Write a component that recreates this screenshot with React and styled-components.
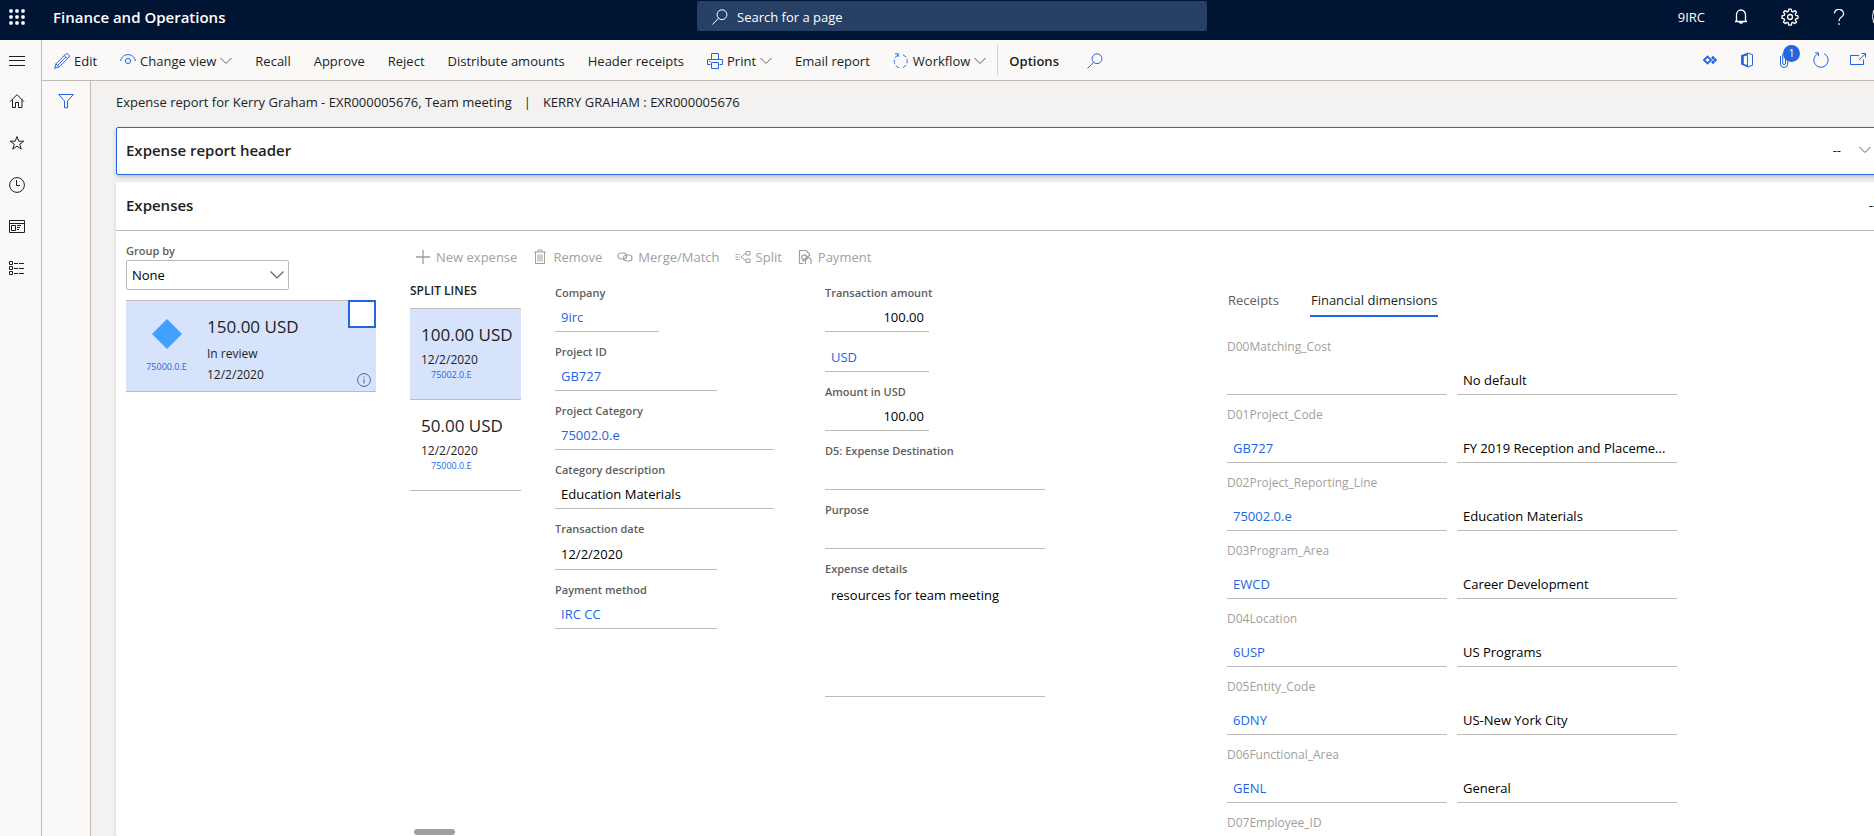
import React from "react";
import styled, { createGlobalStyle } from "styled-components";

const GlobalStyle = createGlobalStyle`
  *, *::before, *::after { box-sizing: border-box; }
  html, body { margin: 0; padding: 0; overflow: hidden; }
  body, button, input, select, textarea {
    font-family: "Open Sans", "Noto Sans", sans-serif;
    font-size: 13px;
    color: #201f1e;
  }
  button { background: none; border: 0; padding: 0; cursor: pointer; }
`;

const blue = "#2266e3";
const line = "#bebbb8";

/* ---------- icons ---------- */

const Svg = styled.svg`
  display: block;
  flex: none;
  fill: none;
  stroke: currentColor;
  stroke-width: 1;
  color: ${(p) => p.$color || "inherit"};
`;

const Icon = ({ size = 16, color, children }) => (
  <Svg width={size} height={size} viewBox="0 0 16 16" $color={color} aria-hidden="true">
    {children}
  </Svg>
);

const WaffleIcon = () => (
  <Icon>
    {[0, 6, 12].map((y) =>
      [0, 6, 12].map((x) => (
        <rect key={`${x}-${y}`} x={x + 0.3} y={y + 0.3} width="3.4" height="3.4" rx="1" fill="currentColor" stroke="none" />
      ))
    )}
  </Icon>
);
const SearchIcon = ({ size, color }) => (
  <Icon size={size} color={color}>
    <circle cx="10" cy="5.7" r="4.9" />
    <path d="M6.5 9.3 L0.5 15.5" />
  </Icon>
);
const BellIcon = () => (
  <Icon>
    <path d="M3.5 12.5 V6 a4.5 5 0 0 1 9 0 V12.5 M2 12.5 H14 M6.3 13 a1.8 1.8 0 0 0 3.4 0" strokeWidth="1.3" />
  </Icon>
);
const GearIcon = () => (
  <Icon size={18}>
    <circle cx="8" cy="8" r="2.2" strokeWidth="1.2" />
    <path
      strokeWidth="1.2"
      strokeLinejoin="round"
      d="M6.9 1 h2.2 l.4 1.9 1.1.5 1.7-1.1 1.5 1.5 -1.1 1.7 .5 1.1 1.9.4 v2.2 l-1.9.4 -.5 1.1 1.1 1.7 -1.5 1.5 -1.7-1.1 -1.1.5 -.4 1.9 h-2.2 l-.4-1.9 -1.1-.5 -1.7 1.1 -1.5-1.5 1.1-1.7 -.5-1.1 -1.9-.4 v-2.2 l1.9-.4 .5-1.1 -1.1-1.7 1.5-1.5 1.7 1.1 1.1-.5z"
    />
  </Icon>
);
const HelpIcon = () => (
  <Icon>
    <path d="M3.5 4.5 a4.5 4.2 0 1 1 6.6 3.8 q-2.1 1.4-2.1 4" strokeWidth="1.2" />
    <rect x="7.3" y="14.2" width="1.4" height="1.6" fill="currentColor" stroke="none" />
  </Icon>
);
const MenuIcon = () => (
  <Icon>
    <path d="M0 4.5 H16 M0 8.5 H16 M0 13.5 H16" />
  </Icon>
);
const HomeIcon = () => (
  <Icon>
    <path d="M1 8.7 L8 1.7 L15 8.7 M3.5 6.5 V14.5 H6.5 V9.5 H9.5 V14.5 H13 V6.5" />
  </Icon>
);
const StarIcon = () => (
  <Icon>
    <path d="M8 1.5 L9.7 6.2 H14.8 L10.7 9.2 L12.3 14.2 L8 11.2 L3.7 14.2 L5.3 9.2 L1.2 6.2 H6.3 Z" />
  </Icon>
);
const ClockIcon = () => (
  <Icon>
    <circle cx="8" cy="8" r="7.4" />
    <path d="M7.5 3 V8.5 H11" />
  </Icon>
);
const WorkspaceIcon = () => (
  <Icon>
    <path d="M0.5 1.5 H15.5 V13.5 H0.5 Z M0.5 4.5 H15.5 M2.5 6.5 H6.5 V11.5 H2.5 Z M8 6.5 H12 M8 8.5 H11 M8 10.5 H10" />
  </Icon>
);
const ModulesIcon = () => (
  <Icon>
    <path d="M0.5 0.5 h3 v3 h-3z M0.5 5.5 h3 v3 h-3z M0.5 10.5 h3 v3 h-3z M5 2.5 H9 M10 2.5 H15 M5 7.5 H9 M10 7.5 H15 M5 12.5 H9 M10 12.5 H15" />
  </Icon>
);
const FunnelIcon = () => (
  <Icon color={blue}>
    <path d="M0.7 1.5 H15.3 L9.5 8 V14.8 H6.5 V8 Z" strokeLinejoin="round" />
  </Icon>
);
const EditIcon = () => (
  <Icon color={blue}>
    <path d="M0.7 15.3 L2 10.8 L11.8 1 Q13.2 0.2 14.5 1.5 T15 4.2 L5.2 14 Z M10.3 2.6 L13.4 5.7 M2 10.8 L5.2 14 M3.6 12.4 L11.9 4.1" />
  </Icon>
);
const EyeIcon = () => (
  <Icon color={blue}>
    <path d="M0.5 8 C2 -0.5 14 -0.5 15.5 8" />
    <circle cx="8" cy="8" r="2.6" />
  </Icon>
);
const ChevronIcon = ({ size = 12, color = "#605e5c" }) => (
  <Svg width={size} height={size} viewBox="0 0 12 12" $color={color} aria-hidden="true">
    <path d="M0.5 3 L6 8.5 L11.5 3" />
  </Svg>
);
const PrintIcon = () => (
  <Icon color={blue}>
    <path d="M4.5 6.5 V0.5 H11.5 V6.5 M3.5 11.5 H0.5 V6.5 H15.5 V11.5 H12.5 M4.5 9.5 H11.5 V15.5 H4.5 Z M2 8.5 H3.5" />
  </Icon>
);
const WorkflowIcon = () => (
  <Icon color={blue}>
    <path d="M5 2 A7 7 0 0 0 6 14.8 M10 1.8 A7 7 0 0 1 10 14.6" strokeDasharray="4 2" />
    <path d="M2 0.8 H5.3 V4" />
  </Icon>
);
const DiamondsIcon = () => (
  <Icon color={blue}>
    <path d="M5.5 4.5 L9 8 L5.5 11.5 L2 8 Z" strokeWidth="1.8" />
    <path d="M11 3.7 L13 5.7 L11 7.7 L9 5.7Z M11 8.3 L13 10.3 L11 12.3 L9 10.3Z M13.2 6 L15.2 8 L13.2 10 L11.2 8Z" fill="currentColor" stroke="none" />
  </Icon>
);
const OfficeIcon = () => (
  <Icon color={blue}>
    <path d="M8.5 0.8 L2 3.2 V12.6 L8.5 15.2 V13 L4.8 12 V4.6 L8.5 3.2 Z" fill="currentColor" stroke="none" />
    <path d="M8.5 1 V15 L13.5 13.3 V2.6 Z" />
  </Icon>
);
const ClipIcon = () => (
  <Icon color={blue}>
    <path d="M9.5 4 V11 a1.3 1.5 0 0 1 -2.8 0 V3 a2.2 2.4 0 0 1 5 0 V12 a3.6 3.5 0 0 1 -7.2 0 V4" />
  </Icon>
);
const RefreshIcon = () => (
  <Icon color={blue}>
    <path d="M5 1.6 A7.2 7.2 0 1 0 11 1.6 M2 0.8 H5.5 V4.3" />
  </Icon>
);
const PopOutIcon = () => (
  <Icon color={blue}>
    <path d="M9 3.5 H0.5 V12.5 H13.5 V7.5 M9 8 L15.3 2 M11.5 1.5 H15.5 V5.5" />
  </Icon>
);
const PlusIcon = () => (
  <Icon>
    <path d="M8 1 V15 M1 8 H15" strokeWidth="1.3" />
  </Icon>
);
const TrashIcon = () => (
  <Icon>
    <path d="M2 3 H14 M6 3 V1 H10 V3 M3.5 3 V14.5 H12.5 V3 M6 5.5 V12.5 M8 5.5 V12.5 M10 5.5 V12.5" />
  </Icon>
);
const LinkIcon = () => (
  <Icon>
    <rect x="1" y="4" width="8.6" height="6" rx="3" strokeWidth="1.2" />
    <rect x="6.4" y="6" width="8.6" height="6" rx="3" strokeWidth="1.2" />
  </Icon>
);
const SplitIcon = () => (
  <Icon>
    <path d="M0.5 5.5 H3 M0.5 8 H3 M0.5 10.5 H3 M4 5.5 H5 M4 8 H5 M4 10.5 H5 M11 4 L6 8 L11 12 M11 2.5 H15 V6 H11 Z M11 10 H15 V13.5 H11 Z" />
  </Icon>
);
const PaymentIcon = () => (
  <Icon>
    <path d="M2.5 14.5 V1.5 H9 L12.5 5 V7 M5.5 12.5 L12 6.5 M8.5 15 V11 L11.5 8 L14 10.5 V15 M2.5 14.5 H6.5" strokeWidth="1.2" />
    <circle cx="7.2" cy="8.2" r="2.4" strokeWidth="1.2" />
  </Icon>
);
const InfoIcon = () => (
  <Svg width="14" height="14" viewBox="0 0 14 14" $color="#3d67ae" aria-hidden="true">
    <circle cx="7" cy="7" r="6.4" />
    <path d="M7 6 V10.5 M7 3.5 V4.7" />
  </Svg>
);
const CategoryDiamond = () => (
  <Svg width="30" height="30" viewBox="0 0 30 30" $color="#409fff" aria-hidden="true">
    <path d="M15 0 L30 15 L15 30 L0 15 Z" fill="currentColor" stroke="none" />
  </Svg>
);

/* ---------- shell ---------- */

const Page = styled.div`
  display: flex;
  flex-direction: column;
  width: calc(100% + 30px);
  height: 100vh;
  overflow: hidden;
  background: #f3f2f1;
`;

const TopBar = styled.header`
  display: grid;
  grid-template-columns: 1fr 510px 1fr;
  flex: none;
  height: 40px;
  background: #001433;
  color: #fff;
`;

const TopLeft = styled.div`
  display: flex;
  align-items: center;
  gap: 28px;
  height: 34px;
  padding-left: 9px;
  button { color: #fff; }
`;

const AppTitle = styled.h1`
  margin: 0;
  font-size: 15px;
  font-weight: 600;
`;

const SearchBox = styled.label`
  display: flex;
  align-items: center;
  gap: 9px;
  height: 30px;
  margin-top: 1px;
  padding: 2px 0 0 15px;
  border-radius: 2px;
  background: #264066;
  color: #fff;
  input {
    flex: 1;
    border: 0;
    padding: 0;
    outline: 0;
    background: transparent;
    color: #fff;
  }
  input::placeholder { color: #fff; opacity: 1; }
`;

const TopRight = styled.div`
  display: flex;
  justify-content: flex-end;
  align-items: center;
  height: 33px;
`;

const Company = styled.button`
  margin-right: 11px;
  color: #fff;
`;

const TopButton = styled.button`
  display: flex;
  justify-content: center;
  width: 49px;
  color: #fff;
`;

const Avatar = styled.button`
  width: 31px;
  height: 31px;
  margin: 0 1px 0 9px;
  border: 1px solid #fff;
  border-radius: 50%;
`;

const Body = styled.div`
  display: flex;
  flex: 1;
  min-height: 0;
`;

const NavRail = styled.nav`
  flex: none;
  width: 42px;
  border-right: 1px solid ${line};
  background: #faf9f8;
`;

const NavButton = styled.button`
  display: flex;
  align-items: center;
  width: 100%;
  height: ${(p) => (p.$first ? 40 : 42)}px;
  padding-left: 9px;
`;

const Workspace = styled.div`
  flex: 1;
  display: flex;
  flex-direction: column;
  min-width: 0;
`;

const ActionBar = styled.div`
  display: flex;
  align-items: center;
  justify-content: space-between;
  flex: none;
  height: 41px;
  padding: 0 28px 0 12px;
  border-bottom: 1px solid ${line};
  background: #faf9f8;
`;

const Actions = styled.div`
  display: flex;
  align-items: center;
  gap: 23px;
`;

const ActionButton = styled.button`
  display: flex;
  align-items: center;
  gap: 4px;
  padding-top: 1px;
  white-space: nowrap;
  font-weight: ${(p) => (p.$strong ? 600 : 400)};
`;

const OptionsGroup = styled.div`
  display: flex;
  align-items: center;
  gap: 28px;
  height: 30px;
  margin-left: -12px;
  padding-left: 11px;
  border-left: 1px solid #d2d0ce;
`;

const BarIcons = styled.div`
  display: flex;
`;

const BarIconButton = styled.button`
  position: relative;
  display: flex;
  justify-content: center;
  width: 37px;
`;

const Badge = styled.span`
  position: absolute;
  left: 18px;
  top: -7px;
  width: 17px;
  height: 17px;
  border-radius: 50%;
  background: ${blue};
  color: #fff;
  font-size: 10px;
  line-height: 17px;
  text-align: center;
`;

const Content = styled.div`
  display: flex;
  flex: 1;
  min-height: 0;
`;

const FilterPane = styled.aside`
  flex: none;
  width: 49px;
  padding: 12px 0 0 16px;
  border-right: 1px solid ${line};
  background: #faf9f8;
`;

const Main = styled.main`
  flex: 1;
  display: flex;
  flex-direction: column;
  min-width: 0;
  padding-left: 25px;
`;

const RecordTitle = styled.p`
  display: flex;
  align-items: center;
  gap: 12px;
  flex: none;
  height: 46px;
  margin: 0;
  padding-bottom: 4px;
`;

const SectionTitle = styled.h2`
  margin: 0;
  font-size: 15px;
  font-weight: 600;
  line-height: 20px;
`;

const HeaderCard = styled.section`
  display: flex;
  align-items: center;
  gap: 18px;
  flex: none;
  height: 48px;
  padding: 0 32px 2px 9px;
  border: 1px solid ${blue};
  border-radius: 2px;
  background: #fff;
  box-shadow: 0 2px 4px rgba(0, 0, 0, 0.2);
  ${SectionTitle} { flex: 1; }
`;

const ExpensesCard = styled.section`
  flex: 1;
  display: flex;
  flex-direction: column;
  min-height: 0;
  margin-top: 7px;
  border-radius: 2px;
  background: #fff;
  box-shadow: 0 1px 4px rgba(0, 0, 0, 0.15);
`;

const CardHeader = styled.div`
  display: flex;
  align-items: center;
  justify-content: space-between;
  flex: none;
  height: 49px;
  padding: 0 27px 2px 10px;
  border-bottom: 1px solid ${line};
`;

const CardBody = styled.div`
  position: relative;
  flex: 1;
  display: flex;
  gap: 34px;
  min-height: 0;
  padding-left: 10px;
  overflow: hidden;
`;

/* ---------- expense list ---------- */

const ExpenseList = styled.div`
  flex: none;
  width: 250px;
  padding-top: 11px;
`;

const FieldLabel = styled.label`
  display: block;
  font-size: 11px;
  font-weight: 600;
  line-height: ${(p) => (p.$compact ? 18 : 20)}px;
  color: #605e5c;
`;

const SelectWrap = styled.div`
  display: grid;
  align-items: center;
  width: 163px;
  margin-bottom: 10px;
  select, svg { grid-area: 1 / 1; }
  select {
    height: 30px;
    padding: 0 5px;
    border: 1px solid ${line};
    border-radius: 2px;
    background: #fff;
    appearance: none;
    color: #000;
  }
  svg { justify-self: end; margin-right: 5px; pointer-events: none; }
`;

const ExpenseCard = styled.article`
  position: relative;
  display: flex;
  height: 92px;
  border: solid ${line};
  border-width: 1px 0;
  background: #d7e3fb;
`;

const CategoryCell = styled.div`
  display: flex;
  flex-direction: column;
  align-items: center;
  gap: 12px;
  width: 81px;
  padding-top: 18px;
`;

const CategoryCode = styled.span`
  font-size: 9px;
  line-height: 12px;
  color: ${blue};
`;

const ExpenseInfo = styled.div`
  padding-top: 14px;
`;

const Amount = styled.div`
  margin-bottom: 4px;
  font-size: 17px;
  font-weight: 500;
  line-height: 24px;
  white-space: nowrap;
`;

const Meta = styled.div`
  font-size: 12px;
  line-height: ${(p) => p.$line || 21}px;
`;

const RowCheck = styled.input.attrs({ type: "checkbox" })`
  position: absolute;
  top: -1px;
  right: 0;
  width: 28px;
  height: 28px;
  margin: 0;
  border: 2px solid ${blue};
  background: #fff;
  appearance: none;
`;

const InfoButton = styled.button`
  position: absolute;
  right: 5px;
  bottom: 4px;
`;

/* ---------- expense detail ---------- */

const Detail = styled.div`
  flex: 1;
  min-width: 0;
  padding-top: 12px;
`;

const DetailTools = styled.div`
  display: flex;
  align-items: center;
  gap: 15px;
  height: 28px;
  margin-bottom: 12px;
  padding-left: 5px;
`;

const ToolButton = styled.button`
  display: flex;
  align-items: center;
  gap: 5px;
  color: #a19f9d;
  white-space: nowrap;
`;

const DetailGrid = styled.div`
  display: grid;
  grid-template-columns: 145px 270px minmax(240px, 402px) 1fr;
`;

const SplitTitle = styled.h3`
  margin: 0 0 9px;
  font-size: 12px;
  font-weight: 600;
  line-height: 16px;
`;

const SplitList = styled.div`
  width: 111px;
  border-top: 1px solid ${line};
`;

const SplitItem = styled.article`
  height: 91px;
  padding: 14px 0 0 11px;
  border-bottom: 1px solid ${line};
  background: ${(p) => (p.$selected ? "#d7e3fb" : "#fff")};
  ${CategoryCode} { display: block; padding-left: 10px; }
`;

const FieldColumn = styled.div`
  display: flex;
  flex-direction: column;
  gap: 10px;
`;

const TextInput = styled.input`
  display: block;
  width: ${(p) => p.$width || "100%"};
  height: ${(p) => p.$height || 29}px;
  padding: 0 5px 0 6px;
  border: 0;
  border-bottom: 1px solid ${line};
  border-radius: 0;
  outline: 0;
  background: transparent;
  color: ${(p) => (p.$link ? blue : "#000")};
  text-align: ${(p) => (p.$right ? "right" : "left")};
  text-overflow: ellipsis;
`;

const TextBox = styled.textarea`
  display: block;
  width: 220px;
  height: 118px;
  padding: 7px 5px 7px 6px;
  border: 0;
  border-bottom: 1px solid ${line};
  outline: 0;
  resize: none;
  line-height: 18px;
  color: #000;
`;

const Tabs = styled.div`
  display: flex;
  gap: 30px;
  margin-bottom: 20px;
`;

const Tab = styled.button`
  height: 34px;
  padding: 2px 1px 0;
  border-bottom: 2px solid ${(p) => (p.$active ? blue : "transparent")};
  color: ${(p) => (p.$active ? "#201f1e" : "#605e5c")};
  font-weight: ${(p) => (p.$active ? 500 : 400)};
`;

const DimensionList = styled.div`
  display: flex;
  flex-direction: column;
  gap: 10px;
`;

const DimensionLabel = styled.label`
  display: block;
  margin-bottom: 9px;
  font-size: 12px;
  line-height: 20px;
  color: #a19f9d;
`;

const DimensionPair = styled.div`
  display: grid;
  grid-template-columns: 220px 220px;
  gap: 10px;
`;

const ScrollThumb = styled.div`
  position: absolute;
  left: 298px;
  bottom: 1px;
  width: 41px;
  height: 6px;
  border-radius: 3px;
  background: #a19f9d;
`;

/* ---------- data ---------- */

const navItems = [
  ["Expand the navigation pane", MenuIcon],
  ["Home", HomeIcon],
  ["Favorites", StarIcon],
  ["Recent", ClockIcon],
  ["Workspaces", WorkspaceIcon],
  ["Modules", ModulesIcon],
];

const actions = [
  { label: "Edit", icon: EditIcon },
  { label: "Change view", icon: EyeIcon, menu: true },
  { label: "Recall" },
  { label: "Approve" },
  { label: "Reject" },
  { label: "Distribute amounts" },
  { label: "Header receipts" },
  { label: "Print", icon: PrintIcon, menu: true },
  { label: "Email report" },
  { label: "Workflow", icon: WorkflowIcon, menu: true },
];

const tools = [
  ["New expense", PlusIcon],
  ["Remove", TrashIcon],
  ["Merge/Match", LinkIcon],
  ["Split", SplitIcon],
  ["Payment", PaymentIcon],
];

const splitLines = [
  { amount: "100.00 USD", date: "12/2/2020", code: "75002.0.E", selected: true },
  { amount: "50.00 USD", date: "12/2/2020", code: "75000.0.E" },
];

const generalFields = [
  { id: "company", label: "Company", value: "9irc", link: true, width: "104px" },
  { id: "project", label: "Project ID", value: "GB727", link: true, width: "162px" },
  { id: "category", label: "Project Category", value: "75002.0.e", link: true, width: "219px" },
  { id: "catdesc", label: "Category description", value: "Education Materials", width: "219px" },
  { id: "date", label: "Transaction date", value: "12/2/2020", width: "162px", height: 31 },
  { id: "method", label: "Payment method", value: "IRC CC", link: true, width: "162px" },
];

const amountFields = [
  { id: "amount", label: "Transaction amount", value: "100.00", width: "104px", right: true },
  { id: "currency", aria: "Currency", value: "USD", link: true, width: "104px", height: 30 },
  { id: "usd", label: "Amount in USD", value: "100.00", width: "104px", right: true },
  { id: "dest", label: "D5: Expense Destination", value: "", width: "220px" },
  { id: "purpose", label: "Purpose", value: "", width: "220px" },
];

const dimensions = [
  ["D00Matching_Cost", "", "No default"],
  ["D01Project_Code", "GB727", "FY 2019 Reception and Placeme..."],
  ["D02Project_Reporting_Line", "75002.0.e", "Education Materials"],
  ["D03Program_Area", "EWCD", "Career Development"],
  ["D04Location", "6USP", "US Programs"],
  ["D05Entity_Code", "6DNY", "US-New York City"],
  ["D06Functional_Area", "GENL", "General"],
  ["D07Employee_ID", "", ""],
];

const Field = ({ id, label, aria, value, link, width, height, right }) => (
  <div>
    {label && <FieldLabel htmlFor={id}>{label}</FieldLabel>}
    <TextInput
      id={id}
      aria-label={aria}
      defaultValue={value}
      readOnly
      $link={link}
      $width={width}
      $height={height}
      $right={right}
    />
  </div>
);

export default function App() {
  return (
    <>
      <GlobalStyle />
      <Page>
        <TopBar>
          <TopLeft>
            <button aria-label="App launcher"><WaffleIcon /></button>
            <AppTitle>Finance and Operations</AppTitle>
          </TopLeft>
          <SearchBox>
            <SearchIcon />
            <input aria-label="Search for a page" placeholder="Search for a page" />
          </SearchBox>
          <TopRight>
            <Company>9IRC</Company>
            <TopButton aria-label="Notifications"><BellIcon /></TopButton>
            <TopButton aria-label="Settings"><GearIcon /></TopButton>
            <TopButton aria-label="Help"><HelpIcon /></TopButton>
            <Avatar aria-label="Account" />
          </TopRight>
        </TopBar>
        <Body>
          <NavRail>
            {navItems.map(([label, Glyph], i) => (
              <NavButton key={label} aria-label={label} $first={i < 1}><Glyph /></NavButton>
            ))}
          </NavRail>
          <Workspace>
            <ActionBar>
              <Actions>
                {actions.map(({ label, icon: Glyph, menu }) => (
                  <ActionButton key={label}>
                    {Glyph && <Glyph />}
                    {label}
                    {menu && <ChevronIcon />}
                  </ActionButton>
                ))}
                <OptionsGroup>
                  <ActionButton $strong>Options</ActionButton>
                  <ActionButton aria-label="Search actions"><SearchIcon color={blue} /></ActionButton>
                </OptionsGroup>
              </Actions>
              <BarIcons>
                <BarIconButton aria-label="Power Apps"><DiamondsIcon /></BarIconButton>
                <BarIconButton aria-label="Open in Office"><OfficeIcon /></BarIconButton>
                <BarIconButton aria-label="Attachments"><ClipIcon /><Badge>1</Badge></BarIconButton>
                <BarIconButton aria-label="Refresh"><RefreshIcon /></BarIconButton>
                <BarIconButton aria-label="Open in new window"><PopOutIcon /></BarIconButton>
              </BarIcons>
            </ActionBar>
            <Content>
              <FilterPane>
                <button aria-label="Show filters"><FunnelIcon /></button>
              </FilterPane>
              <Main>
                <RecordTitle>
                  <span>Expense report for Kerry Graham - EXR000005676, Team meeting</span>
                  <span>|</span>
                  <span>KERRY GRAHAM : EXR000005676</span>
                </RecordTitle>
                <HeaderCard>
                  <SectionTitle>Expense report header</SectionTitle>
                  <span>--</span>
                  <ChevronIcon />
                </HeaderCard>
                <ExpensesCard>
                  <CardHeader>
                    <SectionTitle>Expenses</SectionTitle>
                    <span>--</span>
                  </CardHeader>
                  <CardBody>
                    <ExpenseList>
                      <FieldLabel htmlFor="group" $compact>Group by</FieldLabel>
                      <SelectWrap>
                        <select id="group" defaultValue="None">
                          <option>None</option>
                        </select>
                        <ChevronIcon size={14} />
                      </SelectWrap>
                      <ExpenseCard>
                        <CategoryCell>
                          <CategoryDiamond />
                          <CategoryCode>75000.0.E</CategoryCode>
                        </CategoryCell>
                        <ExpenseInfo>
                          <Amount>150.00 USD</Amount>
                          <Meta>In review</Meta>
                          <Meta>12/2/2020</Meta>
                        </ExpenseInfo>
                        <RowCheck aria-label="Select expense" />
                        <InfoButton aria-label="Expense information"><InfoIcon /></InfoButton>
                      </ExpenseCard>
                    </ExpenseList>
                    <Detail>
                      <DetailTools>
                        {tools.map(([label, Glyph]) => (
                          <ToolButton key={label}><Glyph />{label}</ToolButton>
                        ))}
                      </DetailTools>
                      <DetailGrid>
                        <div>
                          <SplitTitle>SPLIT LINES</SplitTitle>
                          <SplitList>
                            {splitLines.map((s) => (
                              <SplitItem key={s.amount} $selected={s.selected}>
                                <Amount>{s.amount}</Amount>
                                <Meta $line={18}>{s.date}</Meta>
                                <CategoryCode>{s.code}</CategoryCode>
                              </SplitItem>
                            ))}
                          </SplitList>
                        </div>
                        <FieldColumn>
                          {generalFields.map((f) => <Field key={f.id} {...f} />)}
                        </FieldColumn>
                        <FieldColumn>
                          {amountFields.map((f) => <Field key={f.id} {...f} />)}
                          <div>
                            <FieldLabel htmlFor="details">Expense details</FieldLabel>
                            <TextBox id="details" readOnly defaultValue="resources for team meeting" />
                          </div>
                        </FieldColumn>
                        <div>
                          <Tabs role="tablist">
                            <Tab role="tab">Receipts</Tab>
                            <Tab role="tab" aria-selected="true" $active>Financial dimensions</Tab>
                          </Tabs>
                          <DimensionList>
                            {dimensions.map(([name, code, text]) => (
                              <div key={name}>
                                <DimensionLabel htmlFor={name}>{name}</DimensionLabel>
                                <DimensionPair>
                                  <TextInput id={name} readOnly defaultValue={code} $link />
                                  <TextInput aria-label={`${name} description`} readOnly defaultValue={text} />
                                </DimensionPair>
                              </div>
                            ))}
                          </DimensionList>
                        </div>
                      </DetailGrid>
                    </Detail>
                    <ScrollThumb />
                  </CardBody>
                </ExpensesCard>
              </Main>
            </Content>
          </Workspace>
        </Body>
      </Page>
    </>
  );
}
